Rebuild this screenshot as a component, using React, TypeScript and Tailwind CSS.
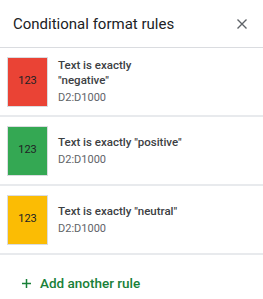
import React from "react";

const rules = [
  { color: "bg-[#ea4335]", title: 'Text is exactly "negative"', range: "D2:D1000", wrap: true },
  { color: "bg-[#34a853]", title: 'Text is exactly "positive"', range: "D2:D1000", wrap: false },
  { color: "bg-[#fbbc04]", title: 'Text is exactly "neutral"', range: "D2:D1000", wrap: false },
];

export default function App() {
  return (
    <div className="w-[263px] h-[299px] bg-white overflow-hidden" style={{ fontFamily: "Roboto, 'Liberation Sans', sans-serif" }}>
      <div className="h-[48px] flex items-center justify-between pl-[13px] pr-[16px] border-b border-[#dadce0]">
        <div className="text-[15px] text-[#202124] leading-none mt-[1px]">Conditional format rules</div>
        <svg width="10" height="10" viewBox="0 0 10 10" className="mt-[1px]">
          <path d="M0.5 0.5L9.5 9.5M9.5 0.5L0.5 9.5" stroke="#5f6368" strokeWidth="1.4" />
        </svg>
      </div>
      {rules.map((r, i) => (
        <div key={i} className="h-[69px] flex items-center pl-[7px] border-b-2 border-[#e8eaed]">
          <div className={`w-[41px] h-[50px] ${r.color} border border-[#dadce0] flex items-center justify-center text-[11px] text-[#202124] shrink-0`}>
            123
          </div>
          <div className="ml-[10px] flex flex-col">
            <div className="text-[11.5px] font-medium text-[#3c4043] leading-[15px] whitespace-nowrap">
              {r.wrap ? (<>Text is exactly<br />"negative"</>) : r.title}
            </div>
            <div className="text-[11px] text-[#5f6368] leading-[15px] mt-[2px]">{r.range}</div>
          </div>
        </div>
      ))}
      <div className="flex items-center pl-[22px] pt-[22px]">
        <svg width="9" height="9" viewBox="0 0 9 9">
          <path d="M4.5 0V9M0 4.5H9" stroke="#188038" strokeWidth="1.5" />
        </svg>
        <span className="ml-[9px] text-[13.5px] font-medium text-[#188038] leading-none">Add another rule</span>
      </div>
    </div>
  );
}
